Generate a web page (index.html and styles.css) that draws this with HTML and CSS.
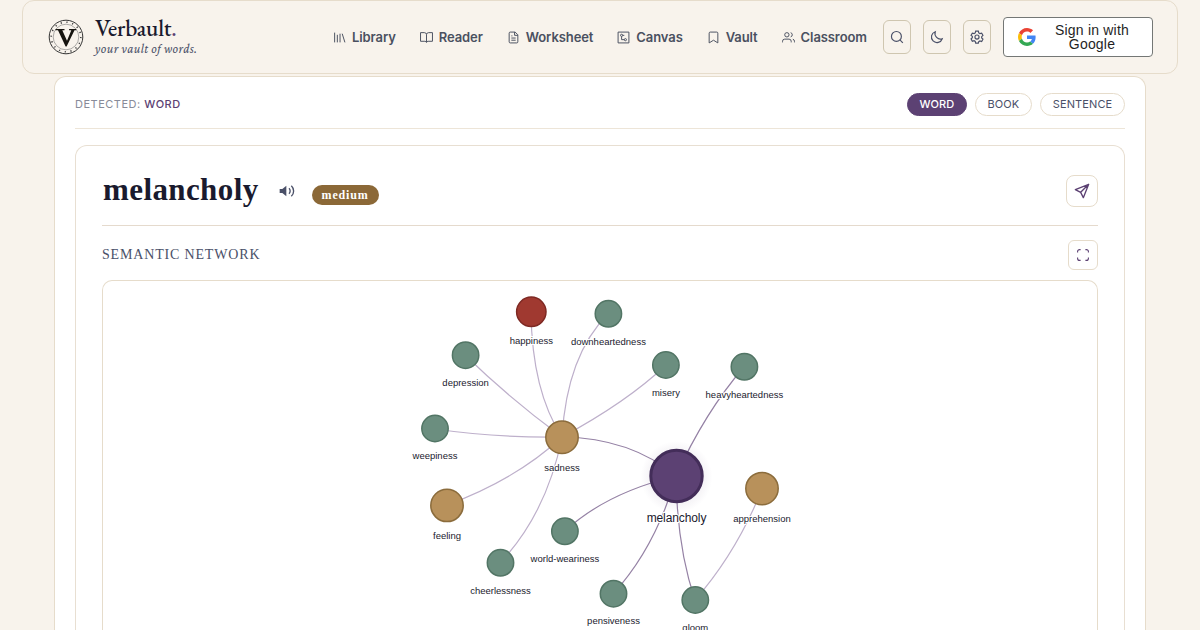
FILE: index.html
```
<!DOCTYPE html>
<html lang="en">
<head>
    <meta charset="UTF-8">
    <meta name="viewport" content="width=device-width, initial-scale=1.0">
    <title>Verbault - melancholy</title>
    <link rel="stylesheet" href="styles.css">
</head>
<body>
    <header class="navbar">
        <a class="brand">
            <svg class="brand-logo" viewBox="0 0 36 36" fill="none" stroke="#333">
                <circle cx="18" cy="18" r="16.8" stroke-width="1"/>
                <circle cx="18" cy="18" r="14.8" stroke-width="1.6" stroke-dasharray="1.2 4.61" stroke="#444"/>
                <circle cx="18" cy="18" r="12.8" stroke-width=".6" stroke="#777"/>
                <path d="M7.5 10h9v1.3h-2.2l4.7 10.5 4.3-10.5h-2.2V10h7.2v1.3h-1.8L18.6 27.4h-1L10 11.3H7.5z" fill="#16140f" stroke="none"/>
            </svg>
            <span class="brand-text">
                <span class="brand-name">Verbault<span class="dot">.</span></span>
                <span class="tagline">your vault of words.</span>
            </span>
        </a>

        <nav class="nav-links">
            <a class="nav-link">
                <svg viewBox="0 0 24 24"><path d="M3 3v18M8 7v14M13 5v16M17 5l5 16"/></svg>
                Library
            </a>
            <a class="nav-link">
                <svg viewBox="0 0 24 24"><path d="M12 6v15M12 6a4 4 0 0 0-4-3H1v16h8a3 3 0 0 1 3 2 3 3 0 0 1 3-2h8V3h-7a4 4 0 0 0-4 3"/></svg>
                Reader
            </a>
            <a class="nav-link">
                <svg viewBox="0 0 24 24"><path d="M15 2H6a2 2 0 0 0-2 2v16a2 2 0 0 0 2 2h12a2 2 0 0 0 2-2V7zM14 2v6h6M8 9h2M8 13h8M8 17h8"/></svg>
                Worksheet
            </a>
            <a class="nav-link">
                <svg viewBox="0 0 24 24"><path d="M2 2h20v20H2z"/><circle cx="8.5" cy="8" r="2"/><circle cx="15.5" cy="16" r="2"/><path d="M8.500 10v6h5M10.500 8h3"/></svg>
                Canvas
            </a>
            <a class="nav-link">
                <svg viewBox="0 0 24 24"><path d="M4 22V4a2 2 0 0 1 2-2h12a2 2 0 0 1 2 2v18l-8-5z"/></svg>
                Vault
            </a>
            <a class="nav-link">
                <svg viewBox="0 0 24 24"><path d="M17 21v-2a4 4 0 0 0-4-4H5a4 4 0 0 0-4 4v2M23 21v-2a4 4 0 0 0-3-3.870M16 3.130a4 4 0 0 1 0 7.750"/><circle cx="9" cy="7" r="4"/></svg>
                Classroom
            </a>
        </nav>

        <div class="nav-actions">
            <button class="icon-btn" aria-label="Search">
                <svg viewBox="0 0 24 24"><circle cx="11" cy="11" r="8.500"/><path d="m22 22-5-5"/></svg>
            </button>
            <button class="icon-btn" aria-label="Dark mode">
                <svg viewBox="0 0 24 24"><path d="M9 3a9.500 9.500 0 1 0 12 12A9.500 9.500 0 0 1 9 3z"/></svg>
            </button>
            <button class="icon-btn" aria-label="Settings">
                <svg viewBox="0 0 24 24"><circle cx="12" cy="12" r="3.500"/><path d="M9.700 2h4.600l.7 3 2 1.200 3-.9 2.200 4-2.200 2.100v2.200l2.200 2.100-2.200 4-3-.9-2 1.200-.7 2.500H9.700L9 19.500l-2-1.200-3 .9-2.200-4L4 13.100v-2.200L1.800 9.300 4 5.300l3 .9L9 5z"/></svg>
            </button>
            <button class="google-btn">
                <svg viewBox="0 0 48 48">
                    <path fill="#EA4335" d="M24 9.500c3.540 0 6.710 1.220 9.210 3.600l6.850-6.850C35.900 2.380 30.470 0 24 0 14.620 0 6.510 5.380 2.560 13.220l7.980 6.190C12.430 13.720 17.740 9.500 24 9.500z"/>
                    <path fill="#4285F4" d="M46.980 24.550c0-1.570-.15-3.090-.38-4.550H24v9.020h12.940c-.58 2.960-2.260 5.480-4.780 7.180l7.730 6c4.510-4.180 7.090-10.360 7.090-17.650z"/>
                    <path fill="#FBBC05" d="M10.530 28.590c-.48-1.450-.76-2.990-.76-4.590s.27-3.140.76-4.590l-7.980-6.190C.92 16.460 0 20.120 0 24c0 3.880.92 7.540 2.560 10.780l7.970-6.190z"/>
                    <path fill="#34A853" d="M24 48c6.480 0 11.930-2.130 15.890-5.810l-7.730-6c-2.150 1.450-4.920 2.300-8.160 2.300-6.260 0-11.570-4.220-13.470-9.910l-7.980 6.190C6.510 42.620 14.620 48 24 48z"/>
                </svg>
                <span>Sign in with Google</span>
            </button>
        </div>
    </header>

    <main class="panel">
        <div class="detect-bar">
            <div class="detected">DETECTED: <b>WORD</b></div>
            <div class="modes">
                <button class="mode active">WORD</button>
                <button class="mode">BOOK</button>
                <button class="mode">SENTENCE</button>
            </div>
        </div>

        <section class="word-card">
            <div class="word-header">
                <h1>melancholy</h1>
                <svg class="speaker" viewBox="0 0 24 24"><path class="solid" d="M11 4v16l-6-5H1V9h4z"/><path d="M15 8a5.500 5.500 0 0 1 0 8M18.500 4a11 11 0 0 1 0 16"/></svg>
                <span class="level">medium</span>
                <button class="share-btn" aria-label="Share">
                    <svg viewBox="0 0 24 24"><path d="M22 2 14 22l-4-8-8-4zM22 2 10 14"/></svg>
                </button>
            </div>
            <div class="section-head">
                <h2>SEMANTIC NETWORK</h2>
                <button class="expand-btn" aria-label="Expand">
                    <svg viewBox="0 0 12 12"><path d="M.6 3.500V2.600a2 2 0 0 1 2-2h1M8.400.6h1a2 2 0 0 1 2 2v.9M11.400 8.500v.9a2 2 0 0 1-2 2h-1M3.600 11.400h-1a2 2 0 0 1-2-2v-.9"/></svg>
                </button>
            </div>
            <div class="network">
                <svg viewBox="103 281 994 349" width="994" height="349">
                    <defs>
                        <radialGradient id="glow">
                            <stop offset=".7" stop-color="#5c4173" stop-opacity=".07"/>
                            <stop offset="1" stop-color="#5c4173" stop-opacity="0"/>
                        </radialGradient>
                    </defs>
                    <g class="edges">
                        <path d="M531 312Q532 391 562 437"/>
                        <path d="M608 314Q567 355 562 437"/>
                        <path d="M465 355Q508 397 562 437"/>
                        <path d="M435 429Q497 438 562 437"/>
                        <path d="M447 505Q517 479 562 437"/>
                        <path d="M500 563Q547 513 562 437"/>
                        <path d="M666 365Q627 402 562 437"/>
                        <path d="M762 489Q737 552 695 600"/>
                    </g>
                    <g class="edges strong">
                        <path d="M562 437Q631 438 676 476"/>
                        <path d="M744 367Q705 412 676 476"/>
                        <path d="M565 531Q606 493 676 476"/>
                        <path d="M613 594Q656 547 676 476"/>
                        <path d="M695 600Q677 547 676 476"/>
                    </g>
                    <circle cx="676.500" cy="477" r="36" fill="url(#glow)"/>
                    <g class="nodes">
                        <circle class="red" cx="531.300" cy="311.800" r="14.700"/>
                        <circle cx="608.400" cy="313.800" r="13.200"/>
                        <circle cx="465.600" cy="355.200" r="13.200"/>
                        <circle cx="665.900" cy="365" r="13.200"/>
                        <circle cx="744.400" cy="366.800" r="13.200"/>
                        <circle cx="435" cy="428.500" r="13.200"/>
                        <circle class="gold" cx="562" cy="437.300" r="16.200"/>
                        <circle class="gold" cx="762" cy="488.600" r="16.200"/>
                        <circle class="gold" cx="447" cy="505.400" r="16.200"/>
                        <circle cx="564.900" cy="531.300" r="13.200"/>
                        <circle cx="500.500" cy="562.800" r="13.200"/>
                        <circle cx="613.500" cy="593.700" r="13.200"/>
                        <circle cx="695.300" cy="600" r="13.200"/>
                        <circle class="root" cx="676.500" cy="476" r="25.700"/>
                    </g>
                    <g class="labels">
                        <text x="531.300" y="344">happiness</text>
                        <text x="608.400" y="345">downheartedness</text>
                        <text x="465.600" y="386">depression</text>
                        <text x="665.900" y="396">misery</text>
                        <text x="744.400" y="398">heavyheartedness</text>
                        <text x="435" y="459">weepiness</text>
                        <text x="562" y="471">sadness</text>
                        <text x="762" y="522">apprehension</text>
                        <text x="447" y="539">feeling</text>
                        <text x="564.900" y="562">world-weariness</text>
                        <text x="500.500" y="594">cheerlessness</text>
                        <text x="613.500" y="624">pensiveness</text>
                        <text x="695.300" y="631">gloom</text>
                        <text class="root-label" x="676.500" y="522">melancholy</text>
                    </g>
                </svg>
            </div>
        </section>
    </main>
</body>
</html>
```
FILE: styles.css
```
* {
    box-sizing: border-box;
}

body {
    margin: 0;
    height: 630px;
    overflow: hidden;
    background: #f8f3ec;
    font-family: Inter, sans-serif;
    color: #1a1a2e;
}

button {
    padding: 0;
    font-family: inherit;
    cursor: pointer;
}

svg {
    display: block;
    flex-shrink: 0;
}

.navbar {
    display: flex;
    align-items: center;
    width: 1156px;
    height: 74px;
    margin: 0 auto 2px;
    padding: 0 24px 0 25px;
    border: 1px solid #e6dccb;
    border-radius: 12px;
}

.brand {
    display: flex;
    align-items: center;
    gap: 11px;
    width: 285px;
}

.brand-logo {
    width: 36px;
    height: 36px;
}

.brand-text {
    display: flex;
    flex-direction: column;
    margin-top: -5px;
}

.brand-name {
    height: 27px;
    font: 500 23px/26px "EB Garamond", "Liberation Serif", serif;
    letter-spacing: -0.2px;
}

.dot {
    color: #5c4173;
}

.tagline {
    font: italic 13px/13px "Crimson Pro", "Liberation Serif", serif;
    letter-spacing: 0.4px;
    color: #4a5068;
}

.nav-links {
    display: flex;
    gap: 24px;
}

.nav-link {
    display: flex;
    align-items: center;
    gap: 6px;
    font-size: 13px;
    font-weight: 600;
    letter-spacing: -0.09px;
    color: #4a5060;
}

.nav-link svg {
    width: 13px;
    height: 13px;
    fill: none;
    stroke: #4a5060;
    stroke-width: 1.8;
}

.nav-actions {
    display: flex;
    align-items: center;
    gap: 12px;
    margin-left: auto;
}

.icon-btn {
    display: flex;
    align-items: center;
    justify-content: center;
    width: 28px;
    height: 34px;
    background: none;
    border: 1px solid #cfc6b0;
    border-radius: 6px;
}

.icon-btn svg {
    width: 14px;
    height: 14px;
    fill: none;
    stroke: #4a5068;
    stroke-width: 2;
}

.google-btn {
    display: flex;
    align-items: center;
    width: 150px;
    height: 40px;
    padding: 0 14px;
    background: #fff;
    border: 1px solid #747775;
    border-radius: 4px;
    font: 14px/14px "Liberation Sans", Arial, sans-serif;
    letter-spacing: 0.2px;
    color: #1f1f1f;
}

.google-btn svg {
    width: 18px;
    height: 18px;
}

.google-btn span {
    flex: 1;
    margin-left: 10px;
}

.panel {
    width: 1092px;
    height: 554px;
    margin: 0 auto;
    padding: 0 20px;
    background: #fff;
    border: 1px solid #e6dccb;
    border-bottom: 0;
    border-radius: 12px 12px 0 0;
}

.detect-bar {
    display: flex;
    align-items: center;
    justify-content: space-between;
    height: 52px;
    margin-bottom: 16px;
    padding-top: 3px;
    border-bottom: 1px solid #ede5d8;
}

.detected {
    font-size: 11px;
    letter-spacing: 0.5px;
    color: #888b99;
}

.detected b {
    font-weight: 500;
    color: #5c4173;
}

.modes {
    display: flex;
    gap: 8px;
}

.mode {
    height: 23px;
    padding: 0 11.75px;
    background: #fff;
    border: 1px solid #e6dccb;
    border-radius: 12px;
    font-size: 11px;
    letter-spacing: 0.1px;
    color: #4a5068;
}

.mode.active {
    padding: 0 11.5px;
    background: #5c4173;
    border-color: #5c4173;
    font-weight: 500;
    color: #fff;
}

.word-card {
    height: 485px;
    padding: 0 26px;
    border: 1px solid #e8dfd2;
    border-bottom: 0;
    border-radius: 12px 12px 0 0;
}

.word-header {
    display: flex;
    align-items: center;
    height: 80px;
    padding-top: 10px;
    border-bottom: 1px solid #e5dacd;
}

h1 {
    margin: -2px 0 0 1px;
    font: bold 31px/34px "Liberation Serif", serif;
    letter-spacing: 0.4px;
}

.speaker {
    width: 16px;
    height: 16px;
    margin: 0 17px 0 20px;
    fill: none;
    stroke: #4a5068;
    stroke-width: 2;
}

.speaker .solid {
    fill: #4a5068;
    stroke: none;
}

.level {
    height: 20px;
    margin-top: 8px;
    padding: 0 10px;
    background: #8b6837;
    border-radius: 10px;
    font: bold 12px/20px "Liberation Serif", serif;
    letter-spacing: 0.85px;
    color: #fff;
}

.share-btn,
.expand-btn {
    display: flex;
    align-items: center;
    justify-content: center;
    width: 32px;
    height: 32px;
    margin-left: auto;
    background: #fff;
    border: 1px solid #e6dccb;
    border-radius: 8px;
}

.share-btn svg {
    width: 16px;
    height: 16px;
    fill: none;
    stroke: #5c4173;
    stroke-width: 2;
    stroke-linejoin: round;
}

.section-head {
    display: flex;
    align-items: center;
    height: 54px;
    padding-top: 4px;
}

h2 {
    margin: 0;
    font: 14px/16px "Liberation Serif", serif;
    letter-spacing: 0.83px;
    color: #4a5068;
}

.expand-btn {
    width: 30px;
    height: 30px;
    border-radius: 6px;
}

.expand-btn svg {
    width: 12px;
    height: 12px;
    fill: none;
    stroke: #5c4173;
    stroke-width: 1.1;
}

.network {
    height: 350px;
    border: 1px solid #e6dccb;
    border-bottom: 0;
    border-radius: 10px 10px 0 0;
    overflow: hidden;
}

.edges {
    fill: none;
    stroke: #beb0cb;
    stroke-width: 1.2;
}

.edges.strong {
    stroke: #9582a5;
}

.nodes circle {
    fill: #6b8e7f;
    stroke: #527565;
    stroke-width: 1.5;
}

.nodes .red {
    fill: #a03930;
    stroke: #7e2923;
}

.nodes .gold {
    fill: #b8915b;
    stroke: #8b6c3c;
}

.nodes .root {
    fill: #5c4173;
    stroke: #432d59;
    stroke-width: 3;
}

.labels {
    font: 9.5px "Liberation Sans", Arial, sans-serif;
    text-anchor: middle;
    fill: #1a1a2e;
    stroke: #fff;
    stroke-width: 2;
    paint-order: stroke;
}

.root-label {
    font-size: 12px;
    letter-spacing: -0.1px;
}
```
